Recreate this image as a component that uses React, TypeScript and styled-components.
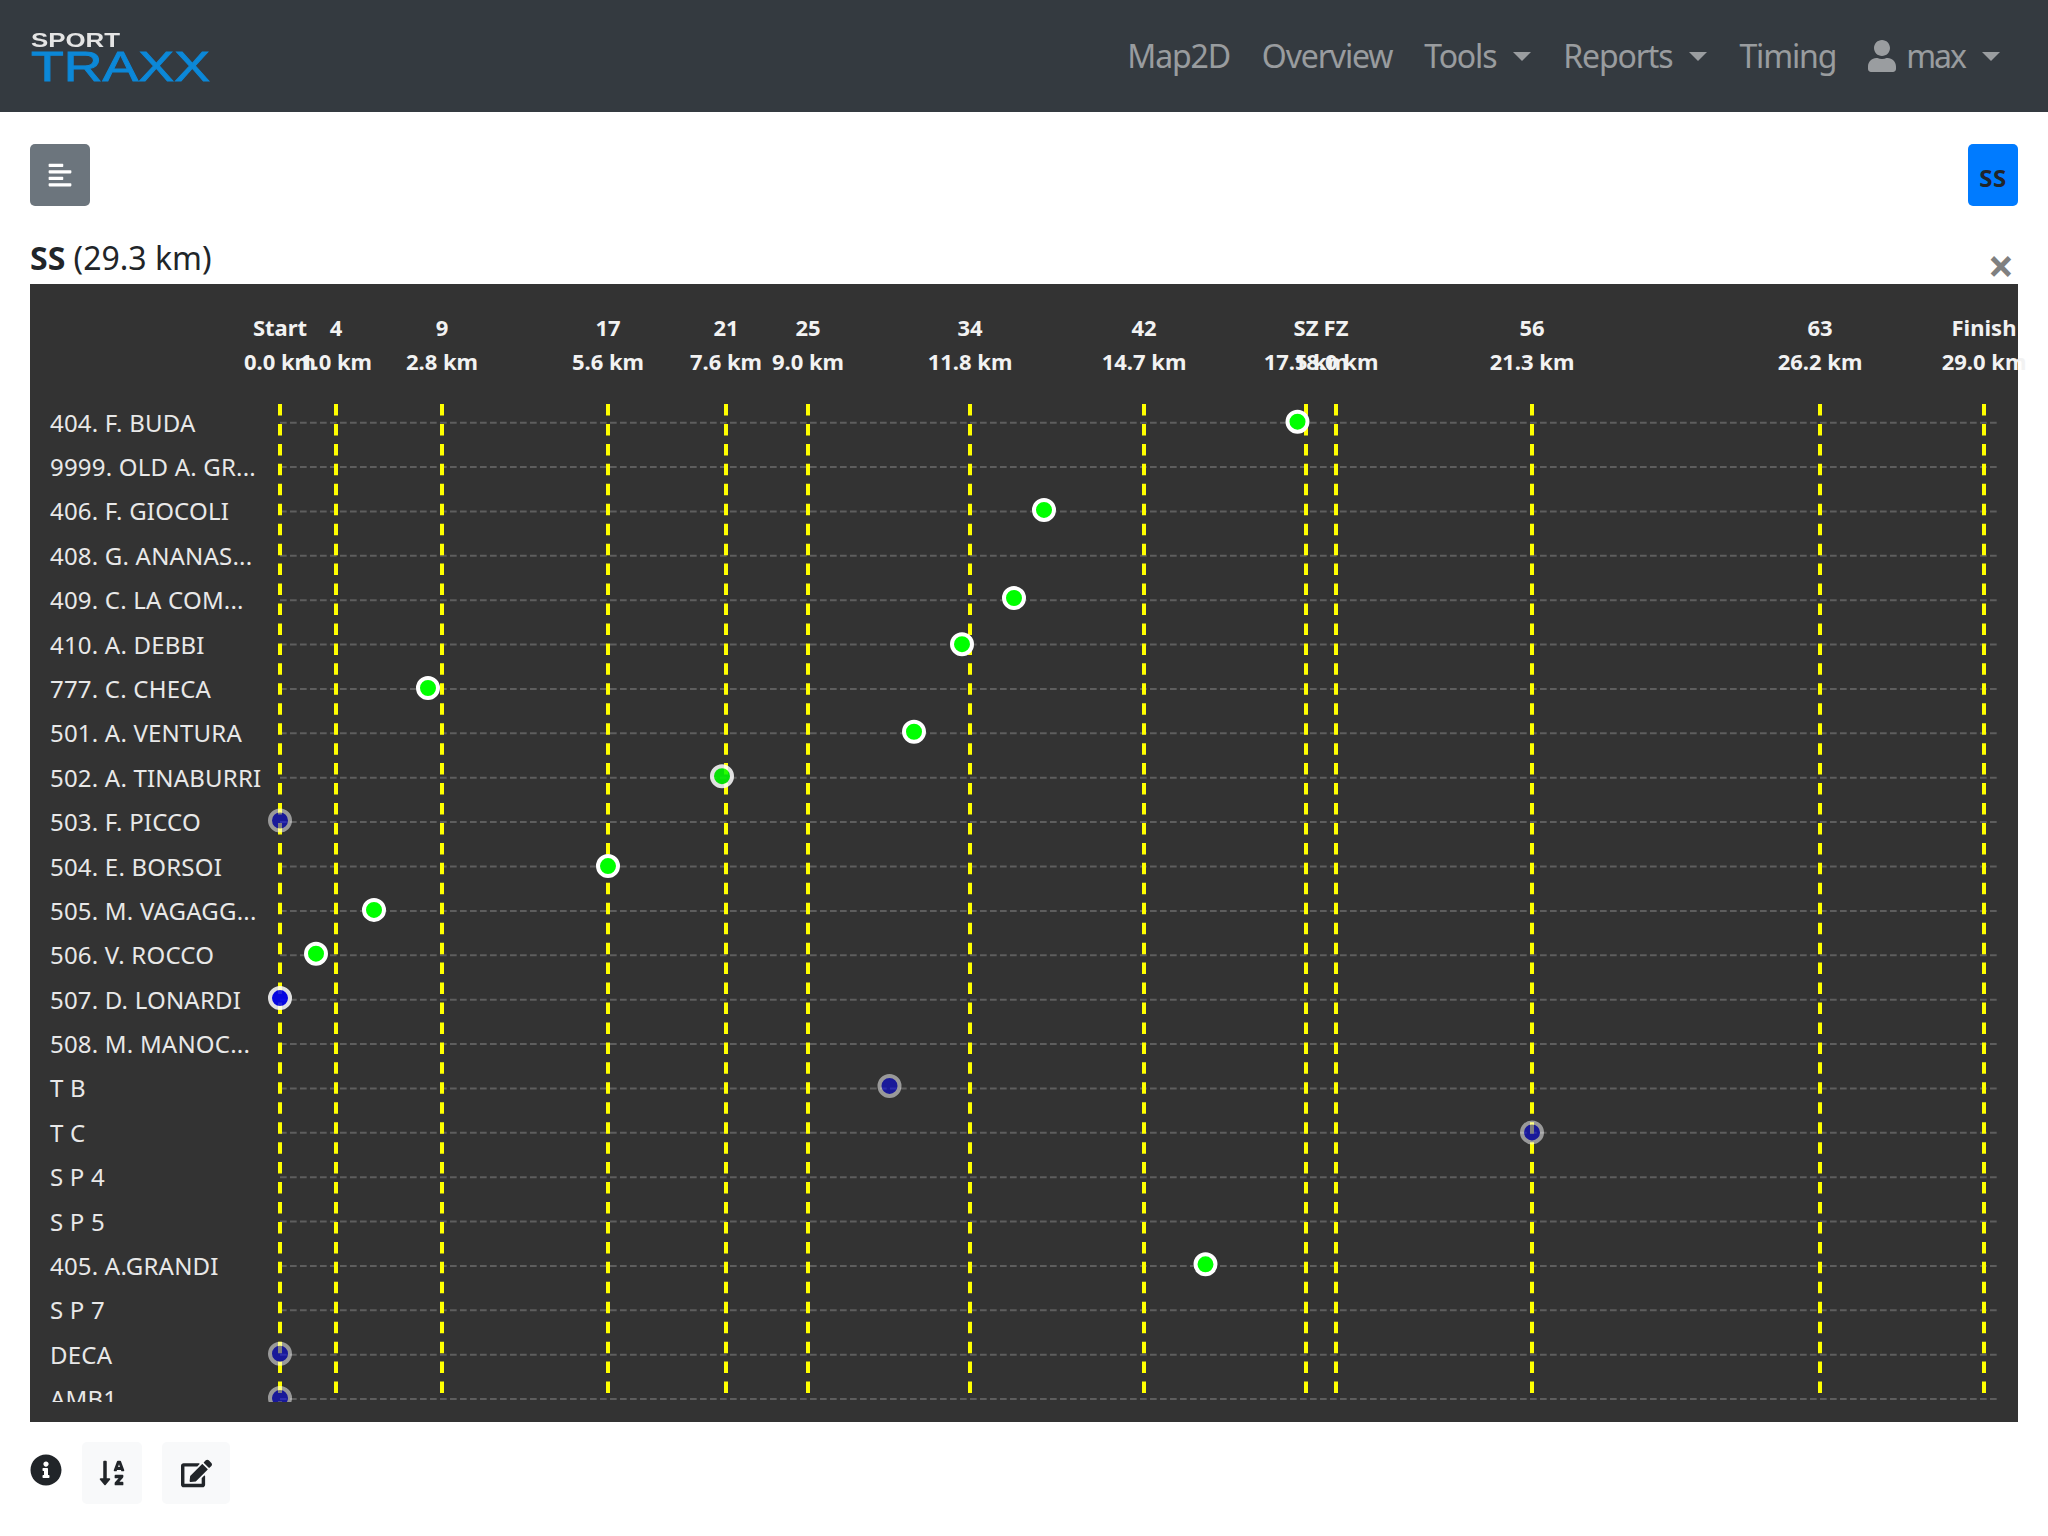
import React from 'react';
import styled, { createGlobalStyle } from 'styled-components';
import { FaAlignLeft, FaEdit, FaInfoCircle, FaSortAlphaDown, FaUser } from 'react-icons/fa';

const FONT = '"Noto Sans", "Open Sans", sans-serif';

const GlobalStyle = createGlobalStyle`
  html, body {
    margin: 0;
    padding: 0;
    background: #fff;
    color: #212529;
    font-family: ${FONT};
  }
`;

const Navbar = styled.nav`
  height: 112px;
  background-color: #343a40;
  display: flex;
  align-items: center;
  justify-content: space-between;
  padding: 0 30px;
  box-sizing: border-box;
`;

const LogoBox = styled.svg`
  width: 182px;
  height: 52px;
  overflow: visible;
  filter: blur(0.5px);
`;

const NavList = styled.div`
  display: flex;
  align-items: center;
  margin-right: 2px;
`;

const NavLink = styled.a`
  display: flex;
  align-items: center;
  padding: 0 16px;
  font-size: 32px;
  letter-spacing: -1.15px;
  color: rgba(255, 255, 255, 0.5);
  line-height: 48px;
`;

const UserLink = styled(NavLink)`
  letter-spacing: -2px;
`;

const Caret = styled.span`
  display: inline-block;
  margin-left: 17px;
  border-top: 9.6px solid rgba(255, 255, 255, 0.5);
  border-left: 9.6px solid transparent;
  border-right: 9.6px solid transparent;
`;

const UserIcon = styled(FaUser)`
  width: 28px;
  height: 32px;
  margin-right: 10px;
`;

const Toolbar = styled.div`
  display: flex;
  justify-content: space-between;
  padding: 32px 30px 0;
`;

const ToggleButton = styled.button`
  width: 60px;
  height: 62px;
  padding: 0;
  border: none;
  border-radius: 5px;
  background-color: #6c757d;
  color: #fff;
  display: flex;
  align-items: center;
  justify-content: center;
  font-size: 26px;
`;

const SectionButton = styled.button`
  width: 50px;
  height: 62px;
  padding: 4px 0 0;
  border: none;
  border-radius: 5px;
  background-color: #007bff;
  color: #212529;
  font-family: ${FONT};
  font-weight: 700;
  font-size: 24px;
  letter-spacing: 0.5px;
`;

const TitleRow = styled.div`
  display: flex;
  justify-content: space-between;
  align-items: flex-end;
  height: 78px;
  padding: 0 30px;
  box-sizing: border-box;
`;

const Title = styled.h5`
  margin: 0 0 6px;
  font-size: 32px;
  line-height: 40px;
  font-weight: 400;
  b {
    font-weight: 700;
  }
`;

const CloseMark = styled.span`
  font-size: 46px;
  line-height: 40px;
  font-weight: 700;
  color: #808080;
  margin-right: 4px;
  margin-bottom: -1px;
`;

const ChartPanel = styled.div`
  margin: 0 30px;
  height: 1138px;
  background-color: #333;
`;

const ChartSvg = styled.svg`
  display: block;
  width: 100%;
  height: 100%;
  overflow: visible;
`;

const RowLine = styled.line`
  stroke: #5e5e5e;
  stroke-width: 2;
  stroke-dasharray: 6.67 3.33;
`;

const SectorLine = styled.line`
  stroke: #ffff00;
  stroke-width: 4;
  stroke-dasharray: 11.5 8.45;
`;

const RowLabel = styled.text`
  fill: #e8e8e8;
  font-size: 24px;
  letter-spacing: 0.2px;
`;

const SectorLabel = styled.text`
  fill: #f2f2f2;
  font-size: 22px;
  font-weight: 700;
  text-anchor: middle;
`;

const dotOpacity: { [kind: string]: number } = { green: 1, fade: 0.85, blue: 0.85, dim: 0.5 };

const Dot = styled.circle<{ $kind: string }>`
  stroke: #fff;
  stroke-width: 4;
  fill: ${(p) => (p.$kind === 'green' || p.$kind === 'fade' ? '#00ff00' : '#0000ff')};
  opacity: ${(p) => dotOpacity[p.$kind]};
`;

const Footer = styled.div`
  display: flex;
  align-items: center;
  padding: 20px 30px 0;
`;

const InfoIcon = styled(FaInfoCircle)`
  width: 32px;
  height: 32px;
  margin: -6px 20px 0 0;
  color: #212529;
`;

const LightButton = styled.button<{ $wide?: boolean }>`
  width: ${(p) => (p.$wide ? 68 : 60)}px;
  height: 62px;
  margin-right: 20px;
  padding: 0;
  border: none;
  border-radius: 5px;
  background-color: #f8f9fa;
  color: #212529;
  display: flex;
  align-items: center;
  justify-content: center;
  font-size: ${(p) => (p.$wide ? 31 : 28)}px;
`;

const sectors = [
  { x: 280, name: 'Start', km: '0.0 km' },
  { x: 336, name: '4', km: '1.0 km' },
  { x: 442, name: '9', km: '2.8 km' },
  { x: 608, name: '17', km: '5.6 km' },
  { x: 726, name: '21', km: '7.6 km' },
  { x: 808, name: '25', km: '9.0 km' },
  { x: 970, name: '34', km: '11.8 km' },
  { x: 1144, name: '42', km: '14.7 km' },
  { x: 1306, name: 'SZ', km: '17.5 km' },
  { x: 1336, name: 'FZ', km: '18.0 km' },
  { x: 1532, name: '56', km: '21.3 km' },
  { x: 1820, name: '63', km: '26.2 km' },
  { x: 1984, name: 'Finish', km: '29.0 km' },
];

const rows: { label: string; x?: number; kind?: string; dy?: number }[] = [
  { label: '404. F. BUDA', x: 1297.5, kind: 'green' },
  { label: '9999. OLD A. GR...' },
  { label: '406. F. GIOCOLI', x: 1044, kind: 'green', dy: -0.5 },
  { label: '408. G. ANANAS...' },
  { label: '409. C. LA COM...', x: 1014, kind: 'green', dy: -1.2 },
  { label: '410. A. DEBBI', x: 962, kind: 'green', dy: 0.6 },
  { label: '777. C. CHECA', x: 428, kind: 'green' },
  { label: '501. A. VENTURA', x: 914, kind: 'green', dy: -0.6 },
  { label: '502. A. TINABURRI', x: 722, kind: 'fade', dy: -0.6 },
  { label: '503. F. PICCO', x: 280, kind: 'dim', dy: -0.6 },
  { label: '504. E. BORSOI', x: 608, kind: 'green', dy: 0.6 },
  { label: '505. M. VAGAGG...', x: 374, kind: 'green' },
  { label: '506. V. ROCCO', x: 316, kind: 'green', dy: -0.6 },
  { label: '507. D. LONARDI', x: 280, kind: 'blue', dy: -0.6 },
  { label: '508. M. MANOC...' },
  { label: 'T B', x: 889.5, kind: 'dim', dy: -1.5 },
  { label: 'T C', x: 1532, kind: 'dim', dy: 0.6 },
  { label: 'S P 4' },
  { label: 'S P 5' },
  { label: '405. A.GRANDI', x: 1205.5, kind: 'green', dy: -0.6 },
  { label: 'S P 7' },
  { label: 'DECA', x: 280, kind: 'dim' },
  { label: 'AMB1', x: 280, kind: 'dim' },
];

const ROW_TOP = 422.7;
const ROW_STEP = 44.38;

function Logo() {
  return (
    <LogoBox viewBox="0 0 182 52">
      <text x="1" y="17" fill="#e4e4e4" fontFamily="Liberation Sans" fontWeight="700" fontSize="21" textLength="89" lengthAdjust="spacingAndGlyphs">
        SPORT
      </text>
      <text x="1" y="51" fill="#0c88d8" stroke="#0c88d8" strokeWidth="0.9" fontFamily="Liberation Sans" fontSize="43" textLength="179" lengthAdjust="spacingAndGlyphs">
        TRAXX
      </text>
    </LogoBox>
  );
}

function RaceChart() {
  return (
    <ChartSvg viewBox="30 284 1988 1138">
      <defs>
        <clipPath id="rows-clip">
          <rect x="30" y="400" width="1988" height="1002" />
        </clipPath>
      </defs>
      {sectors.map((s) => (
        <g key={s.name}>
          <SectorLabel x={s.x} y={335.5}>{s.name}</SectorLabel>
          <SectorLabel x={s.x} y={369.5}>{s.km}</SectorLabel>
        </g>
      ))}
      <g clipPath="url(#rows-clip)">
        {rows.map((r, i) => (
          <g key={r.label}>
            <RowLine x1={280} x2={1998} y1={ROW_TOP + i * ROW_STEP} y2={ROW_TOP + i * ROW_STEP} />
            <RowLabel x={50} y={ROW_TOP + 9 + i * ROW_STEP}>{r.label}</RowLabel>
          </g>
        ))}
        {sectors.map((s, i) => (
          <SectorLine key={s.name} x1={s.x} x2={s.x} y1={404} y2={i === 0 ? 1402 : 1394} />
        ))}
        {rows.map((r, i) =>
          r.x !== undefined ? (
            <Dot key={r.label} $kind={r.kind as string} cx={r.x} cy={ROW_TOP - 1 + (r.dy || 0) + i * ROW_STEP} r={10} />
          ) : null
        )}
      </g>
    </ChartSvg>
  );
}

export default function App() {
  return (
    <>
      <GlobalStyle />
      <Navbar>
        <Logo />
        <NavList>
          <NavLink>Map2D</NavLink>
          <NavLink>Overview</NavLink>
          <NavLink>Tools<Caret /></NavLink>
          <NavLink>Reports<Caret /></NavLink>
          <NavLink>Timing</NavLink>
          <UserLink><UserIcon />max<Caret /></UserLink>
        </NavList>
      </Navbar>
      <Toolbar>
        <ToggleButton><FaAlignLeft /></ToggleButton>
        <SectionButton>SS</SectionButton>
      </Toolbar>
      <TitleRow>
        <Title><b>SS</b> (29.3 km)</Title>
        <CloseMark>×</CloseMark>
      </TitleRow>
      <ChartPanel>
        <RaceChart />
      </ChartPanel>
      <Footer>
        <InfoIcon />
        <LightButton><FaSortAlphaDown /></LightButton>
        <LightButton $wide><FaEdit /></LightButton>
      </Footer>
    </>
  );
}
